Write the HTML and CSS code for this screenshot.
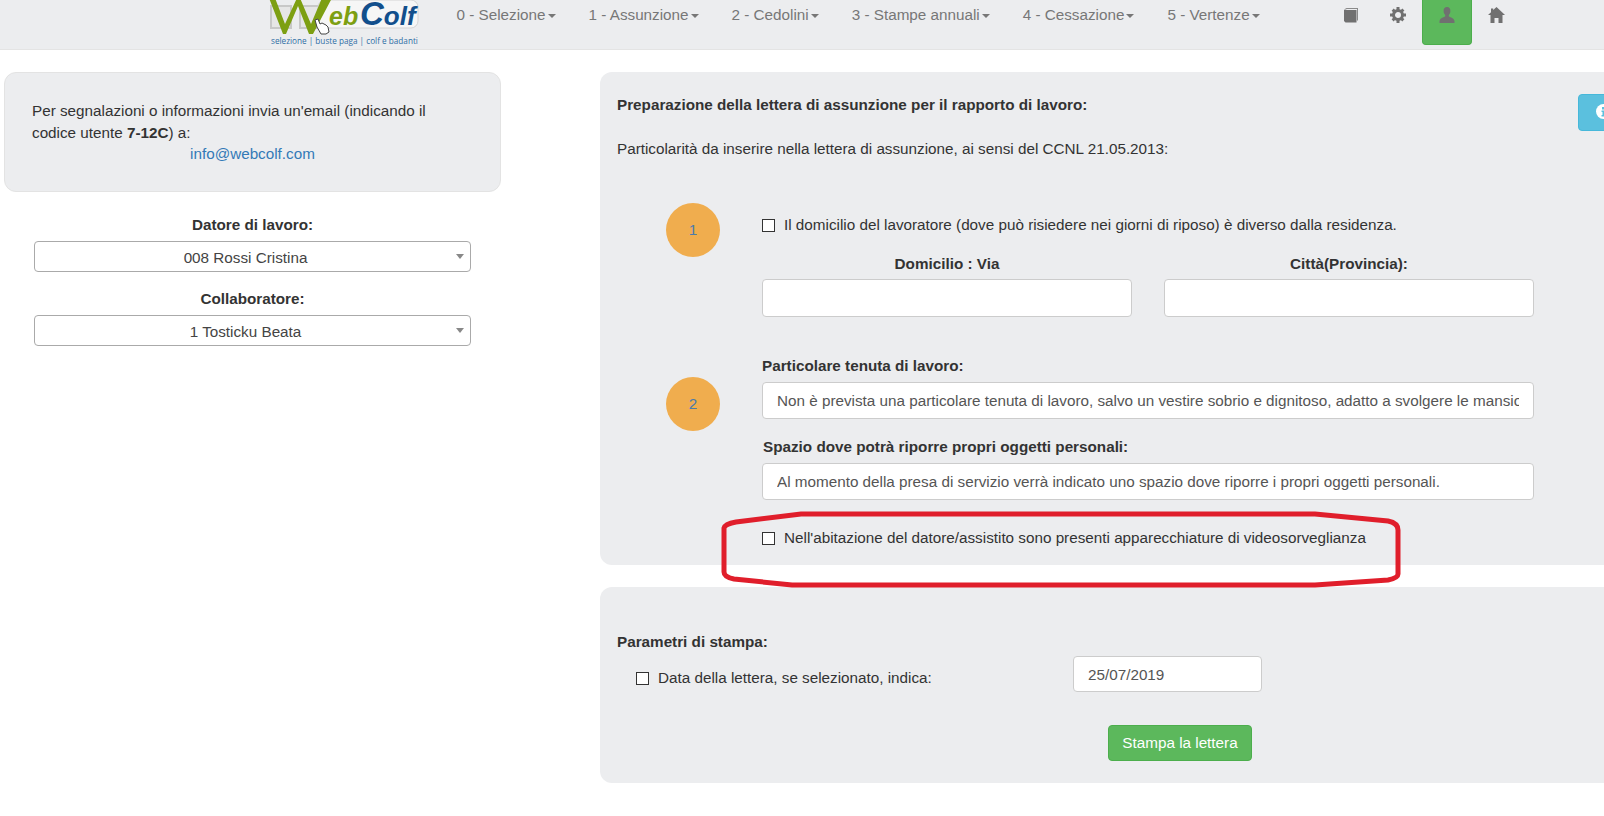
FILE: index.html
```html
<!DOCTYPE html>
<html lang="it">
<head>
  <meta charset="UTF-8" />
  <title>WebColf - Lettera di assunzione</title>
  <link rel="stylesheet" href="styles.css">
</head>
<body>

  <!-- Barra di navigazione -->
  <nav class="navbar">
    <a class="logo" href="#">
      <svg width="152" height="49" viewBox="0 0 152 49">
        <rect x="3" y="6" width="20" height="22" fill="#e6e6e6" stroke="#c8c8c8" stroke-width="2"/>
        <rect x="32" y="6" width="20" height="22" fill="#e6e6e6" stroke="#c8c8c8" stroke-width="2"/>
        <rect x="50" y="0" width="100" height="28" rx="7" fill="#f6f6f6" stroke="#d4d4d4"/>
        <polygon points="1,-2 7,-2 17,24 29,-2 32,-2 43,24 54,-2 64,-2 45,34 41,34 30,6 18,34 15,34" fill="#7d9f12"/>
        <text x="61" y="25" class="logo-eb">eb</text>
        <text x="92" y="25" class="logo-colf"><tspan class="logo-c">C</tspan>olf</text>
        <path d="M47 20l3-1 2 5 2-1 4 2 2 2 1 5-3 2h-5l-4-7z" fill="#fff" stroke="#444"/>
        <text x="3" y="44" class="logo-sub">selezione | buste paga | colf e badanti</text>
      </svg>
    </a>
    <ul class="nav-links">
      <li><a href="#">0 - Selezione<span class="caret"></span></a></li>
      <li><a href="#">1 - Assunzione<span class="caret"></span></a></li>
      <li><a href="#">2 - Cedolini<span class="caret"></span></a></li>
      <li><a href="#">3 - Stampe annuali<span class="caret"></span></a></li>
      <li><a href="#">4 - Cessazione<span class="caret"></span></a></li>
      <li><a href="#">5 - Vertenze<span class="caret"></span></a></li>
    </ul>
    <div class="nav-icons">
      <a href="#" class="nav-icon nav-icon-book">
        <svg width="15" height="16" viewBox="0 0 15 16"><path d="M0 2.500L2.500 1H14v12.500h-1V2H3L1 2.800z" fill="#8a8a8a"/><path d="M0 3h12.500v12.500H1.500L0 14z" fill="#707070"/></svg>
      </a>
      <a href="#" class="nav-icon nav-icon-gear">
        <svg width="16" height="16" viewBox="0 0 16 16"><circle cx="8" cy="8" r="4.500" fill="none" stroke="#707070" stroke-width="3"/><path d="M6.500 0h3v3h-3zM6.500 13h3v3h-3zM0 6.500h3v3H0zM13 6.500h3v3h-3zM1.600 3.700l2.100-2.100 2 2-2.100 2.100zM10.300 12.400l2.100-2.100 2 2-2.100 2.100zM10.300 3.600l2.100-2 2 2-2.100 2.100zM1.600 12.300l2.100-2 2 2-2.100 2.100z" fill="#707070"/></svg>
      </a>
      <a href="#" class="nav-icon nav-icon-active">
        <svg width="16" height="16" viewBox="0 0 16 16"><path d="M8 0c2.400 0 3.600 1.800 3.400 4.200-.1 1.600-.8 3-1.600 3.800v1.600c2 .9 5 1.500 5.700 4.400V16H.5v-2c.7-2.900 3.700-3.500 5.700-4.400V8c-.8-.8-1.500-2.200-1.600-3.800C4.400 1.800 5.600 0 8 0z" fill="#707070"/></svg>
      </a>
      <a href="#" class="nav-icon">
        <svg width="17" height="16" viewBox="0 0 17 16"><path d="M8.500 0L17 8h-2.500v8h-4v-5h-4v5h-4V8H0l3-2.800V1.500h2.200v1.600z" fill="#707070"/></svg>
      </a>
    </div>
  </nav>

  <div class="content">

    <!-- Colonna sinistra -->
    <aside class="side">
      <div class="well">
        <p>Per segnalazioni o informazioni invia un'email (indicando il codice utente <b>7-12C</b>) a:</p>
        <p class="well-mail"><a href="#">info@webcolf.com</a></p>
      </div>
      <div class="side-form">
        <label class="side-label">Datore di lavoro:</label>
        <div class="select-box">
          <select><option>008 Rossi Cristina</option></select>
        </div>
        <label class="side-label">Collaboratore:</label>
        <div class="select-box">
          <select><option>1 Tosticku Beata</option></select>
        </div>
      </div>
    </aside>

    <!-- Colonna principale -->
    <main class="main">
      <section class="panel panel-letter">
        <button class="btn-info">
          <svg width="15" height="15" viewBox="0 0 15 15"><circle cx="7.500" cy="7.500" r="7.500" fill="#fff"/><path d="M6 3h3v2.500H6zM5.500 6.500H9V11h1v1.500H5.500V11h1V8h-1z" fill="#5bc0de"/></svg>
        </button>
        <p class="panel-title">Preparazione della lettera di assunzione per il rapporto di lavoro:</p>
        <p class="panel-sub">Particolarità da inserire nella lettera di assunzione, ai sensi del CCNL 21.05.2013:</p>

        <!-- Punto 1 -->
        <div class="step">
          <div class="circle">1</div>
          <div class="step-body step-body-first">
            <label class="check"><span class="box"></span>Il domicilio del lavoratore (dove può risiedere nei giorni di riposo) è diverso dalla residenza.</label>
            <div class="two-cols">
              <div>
                <label class="field-label field-center">Domicilio : Via</label>
                <input type="text" class="field field-tall" />
              </div>
              <div>
                <label class="field-label field-center">Città(Provincia):</label>
                <input type="text" class="field field-tall" />
              </div>
            </div>
          </div>
        </div>

        <!-- Punto 2 -->
        <div class="step step-second">
          <div class="circle circle-second">2</div>
          <div class="step-body">
            <label class="field-label field-first">Particolare tenuta di lavoro:</label>
            <input type="text" class="field" value="Non è prevista una particolare tenuta di lavoro, salvo un vestire sobrio e dignitoso, adatto a svolgere le mansioni assegnate." />
            <label class="field-label field-next">Spazio dove potrà riporre propri oggetti personali:</label>
            <input type="text" class="field" value="Al momento della presa di servizio verrà indicato uno spazio dove riporre i propri oggetti personali." />
            <label class="check check-last"><span class="box"></span>Nell'abitazione del datore/assistito sono presenti apparecchiature di videosorveglianza</label>
          </div>
        </div>
      </section>

      <section class="panel panel-print">
        <p class="panel-title">Parametri di stampa:</p>
        <div class="date-row">
          <label class="check date-check"><span class="box"></span>Data della lettera, se selezionato, indica:</label>
          <input type="text" class="field date-field" value="25/07/2019" />
        </div>
        <button class="btn-print">Stampa la lettera</button>
      </section>
    </main>
  </div>

  <!-- Cerchio rosso sopra la pagina -->
  <svg class="red-mark" width="684" height="80" viewBox="0 0 684 80">
    <path d="M4 18Q5 14 16 12L81 4H595L668 11Q678 13 678 20V64Q678 68 668 70L595 75H72L14 69Q4 67 4 62Z" fill="none" stroke="#e01e2b" stroke-width="5"/>
  </svg>

</body>
</html>
```

FILE: styles.css
```css
/* Generale */
html, body {
  margin: 0;
  height: 816px;
  overflow: hidden;
}
body {
  position: relative;
  background: #fff;
  color: #333;
  font-family: "Liberation Sans", Arial, sans-serif;
  font-size: 15.25px;
  line-height: 20px;
}
p {
  margin: 0;
}
a {
  color: #337ab7;
  text-decoration: none;
}

/* Barra di navigazione */
.navbar {
  display: flex;
  height: 49px;
  background: #ecedef;
  border-bottom: 1px solid #e4e4e4;
  padding-left: 268px;
}
.logo {
  display: block;
  width: 152px;
  height: 49px;
  overflow: hidden;
}
.logo-eb {
  font: italic bold 25px "Liberation Sans", sans-serif;
  fill: #7d9f12;
}
.logo-colf {
  font: italic bold 26px "Liberation Sans", sans-serif;
  fill: #124f8c;
}
.logo-c {
  font-size: 33px;
}
.logo-sub {
  font: 8.200px "Open Sans", sans-serif;
  fill: #2f6ea5;
}
.nav-links {
  display: flex;
  width: 908px;
  margin: 0;
  padding: 0 0 0 20px;
  box-sizing: border-box;
  list-style: none;
}
.nav-links a {
  display: block;
  padding: 5px 16.500px;
  color: #777;
}
.caret {
  display: inline-block;
  margin-left: 2px;
  vertical-align: middle;
  border-top: 4px solid #777;
  border-left: 4px solid transparent;
  border-right: 4px solid transparent;
}
.nav-icons {
  display: flex;
  align-items: flex-start;
}
.nav-icon {
  display: flex;
  justify-content: center;
  width: 49px;
  height: 45px;
  padding-top: 7px;
  box-sizing: border-box;
}
.nav-icon-book {
  width: 46px;
}
.nav-icon-gear {
  width: 48px;
}
.nav-icon-active {
  background: #5cb85c;
  border: 1px solid #4cae4c;
  border-top: none;
  border-radius: 0 0 4px 4px;
  width: 50px;
}

/* Contenuto */
.content {
  display: flex;
  align-items: flex-start;
  padding: 22px 0 0 4px;
}
.side {
  width: 497px;
  flex: none;
}
.well {
  box-sizing: border-box;
  height: 120px;
  padding: 27px 36px 0 27px;
  background: #ecedef;
  border: 1px solid #e3e3e3;
  border-radius: 12px;
  line-height: 21.500px;
}
.well-mail {
  text-align: center;
  margin-right: -9px;
}
.side-form {
  padding: 23px 30px 0;
}
.side-label {
  display: block;
  text-align: center;
  font-weight: bold;
  margin-bottom: 6px;
}
.select-box {
  position: relative;
  margin-bottom: 17px;
}
.select-box select {
  display: block;
  width: 100%;
  height: 31px;
  padding: 2px 14px 0 0;
  background: #fff;
  border: 1px solid #aaa;
  border-radius: 4px;
  color: #444;
  font: inherit;
  text-align-last: center;
  appearance: none;
}
.select-box::after {
  content: "";
  position: absolute;
  right: 7px;
  top: 13px;
  border-top: 5px solid #888;
  border-left: 4px solid transparent;
  border-right: 4px solid transparent;
}

/* Pannelli a destra */
.main {
  width: 1040px;
  flex: none;
  margin-left: 99px;
}
.panel {
  position: relative;
  background: #ecedef;
  border-radius: 12px;
  padding-left: 17px;
}
.panel-letter {
  padding-top: 23px;
  padding-bottom: 17px;
}
.panel-print {
  margin-top: 22px;
  padding-top: 45px;
  height: 151px;
}
.panel-title {
  font-weight: bold;
}
.panel-sub {
  margin-top: 24px;
}
.btn-info {
  position: absolute;
  left: 978px;
  top: 22px;
  width: 60px;
  height: 37px;
  padding: 0 0 0 17px;
  text-align: left;
  background: #5bc0de;
  border: 1px solid #46b8da;
  border-radius: 4px;
}

/* Punti numerati */
.step {
  display: grid;
  grid-template-columns: 54px 772px;
  column-gap: 42px;
  margin: 44px 0 0 49px;
}
.step-second {
  margin-top: 39px;
}
.circle {
  display: flex;
  align-items: center;
  justify-content: center;
  width: 54px;
  height: 54px;
  border-radius: 50%;
  background: #f0ad4e;
  color: #4a7bab;
}
.circle-second {
  margin-top: 21px;
}
.step-body-first {
  padding-top: 12px;
}
.check {
  display: flex;
  align-items: center;
}
.box {
  width: 11px;
  height: 11px;
  margin-right: 9px;
  flex: none;
  background: #fff;
  border: 1px solid #333;
}
.two-cols {
  display: grid;
  grid-template-columns: 370px 370px;
  column-gap: 32px;
  margin-top: 19px;
}
.field-label {
  display: block;
  font-weight: bold;
  margin-bottom: 5px;
}
.field-center {
  text-align: center;
}
.field-first {
  margin-bottom: 6px;
}
.field-next {
  margin: 18px 0 6px 1px;
}
.field {
  display: block;
  box-sizing: border-box;
  width: 100%;
  height: 37px;
  padding: 0 14px;
  background: #fff;
  border: 1px solid #ccc;
  border-radius: 4px;
  color: #555;
  font: inherit;
}
.field-tall {
  height: 38px;
}
.check-last {
  margin-top: 28px;
}

/* Parametri di stampa */
.date-row {
  display: flex;
  margin-top: 4px;
  padding-left: 19px;
}
.date-check {
  width: 437px;
  height: 36px;
  padding-top: 8px;
  box-sizing: border-box;
}
.date-field {
  width: 189px;
  height: 36px;
  padding-top: 1px;
}
.btn-print {
  display: block;
  width: 144px;
  height: 36px;
  margin: 33px 0 0 491px;
  background: #5cb85c;
  border: 1px solid #4cae4c;
  border-radius: 4px;
  color: #fff;
  font: inherit;
}

/* Segno rosso */
.red-mark {
  position: absolute;
  left: 720px;
  top: 510px;
}
```
